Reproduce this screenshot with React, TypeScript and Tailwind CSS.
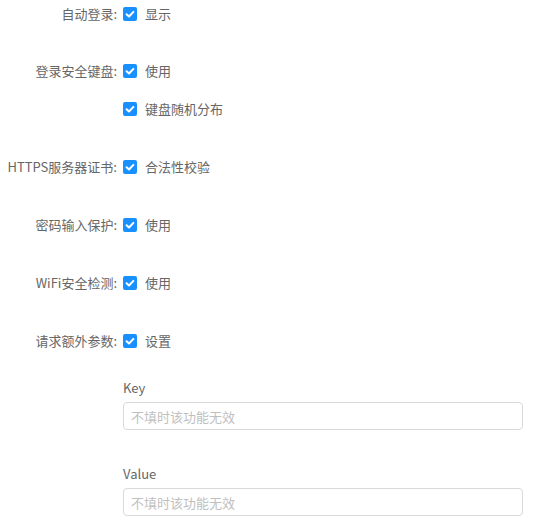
import type { ReactNode } from 'react'

// ============================================================================
// Pieces
// ============================================================================

/** Checked checkbox box with a white tick */
function CheckBox() {
  return (
    <span className="flex h-[14px] w-[14px] shrink-0 items-center justify-center rounded-[2px] bg-[#1890ff]">
      <svg viewBox="0 0 14 14" className="h-[14px] w-[14px]">
        <path
          d="M3.6 7.2 L6 9.5 L10.4 4.9"
          fill="none"
          stroke="#fff"
          strokeWidth="2"
          strokeLinecap="round"
          strokeLinejoin="round"
        />
      </svg>
    </span>
  )
}

interface RowProps {
  label?: string
  text: string
  className?: string
}

/** One form line: right-aligned label, checkbox, option text */
function CheckRow({ label, text, className = '' }: RowProps) {
  return (
    <div className={`flex h-[28px] items-center ${className}`}>
      <span className="w-[117px] shrink-0 whitespace-nowrap pr-[0px] text-right">
        {label ? `${label}:` : ''}
      </span>
      <span className="ml-[6px]">
        <CheckBox />
      </span>
      <span className="ml-[8px] whitespace-nowrap">{text}</span>
    </div>
  )
}

function Field({ label, className = '' }: { label: ReactNode; className?: string }) {
  return (
    <div className={`ml-[123px] w-[400px] ${className}`}>
      <div className="h-[20px] leading-[20px]">{label}</div>
      <input
        placeholder="不填时该功能无效"
        className="mt-[4px] block h-[28px] w-full rounded-[4px] border border-[#d9d9d9] bg-white px-[7px] text-[13px] text-[#555] outline-none placeholder:text-[#bfbfbf]"
      />
    </div>
  )
}

// ============================================================================
// Page
// ============================================================================

export default function App() {
  return (
    <div
      className="h-[522px] w-[538px] bg-white text-[13px] text-[#666]"
      style={{ fontFamily: '"Noto Sans CJK SC", "Noto Sans", sans-serif' }}
    >
      <CheckRow label="自动登录" text="显示" />
      <CheckRow label="登录安全键盘" text="使用" className="mt-[29px]" />
      <CheckRow text="键盘随机分布" className="mt-[10px]" />
      <CheckRow label="HTTPS服务器证书" text="合法性校验" className="mt-[30px]" />
      <CheckRow label="密码输入保护" text="使用" className="mt-[30px]" />
      <CheckRow label="WiFi安全检测" text="使用" className="mt-[30px]" />
      <CheckRow label="请求额外参数" text="设置" className="mt-[30px]" />

      <Field label="Key" className="mt-[23px]" />
      <Field label="Value" className="mt-[34px]" />
    </div>
  )
}
